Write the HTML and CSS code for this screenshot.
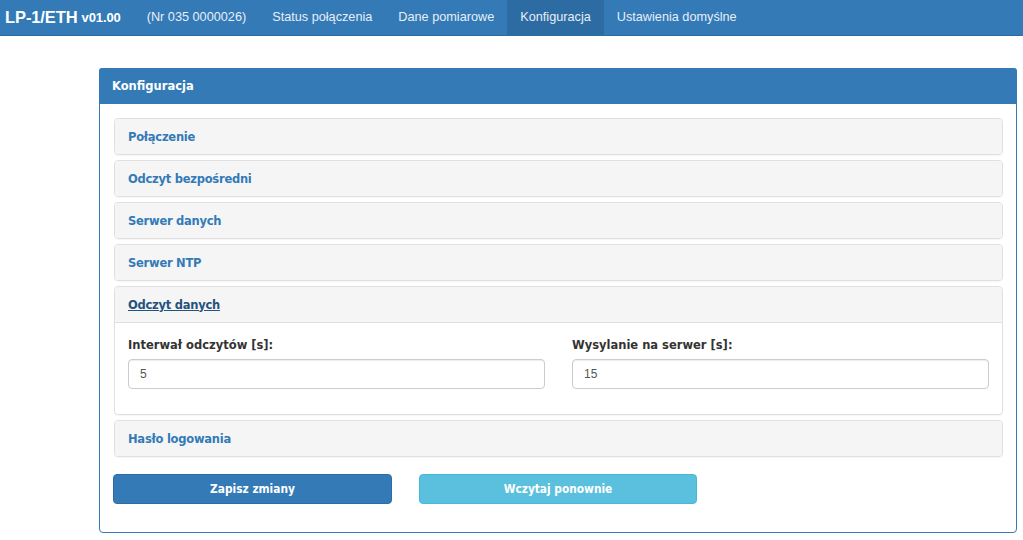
FILE: index.html
```html
<!DOCTYPE html>
<html lang="pl">
<head>
<meta charset="utf-8">
<title>LP-1/ETH</title>
<link rel="stylesheet" href="styles.css">
</head>
<body>
<nav class="navbar">
  <div class="brand">LP-1/ETH <small>v01.00</small></div>
  <ul class="nav">
    <li><a>(Nr 035 0000026)</a></li>
    <li><a>Status połączenia</a></li>
    <li><a>Dane pomiarowe</a></li>
    <li class="active"><a>Konfiguracja</a></li>
    <li><a>Ustawienia domyślne</a></li>
  </ul>
</nav>
<main class="wrap">
  <section class="panel">
    <div class="panel-title">Konfiguracja</div>
    <div class="panel-body">
      <div class="group">
        <div class="sub"><div class="sub-head"><a>Połączenie</a></div></div>
        <div class="sub"><div class="sub-head"><a>Odczyt bezpośredni</a></div></div>
        <div class="sub"><div class="sub-head"><a>Serwer danych</a></div></div>
        <div class="sub"><div class="sub-head"><a>Serwer NTP</a></div></div>
        <div class="sub">
          <div class="sub-head"><a class="open">Odczyt danych</a></div>
          <div class="sub-body">
            <div class="field">
              <label>Interwał odczytów [s]:</label>
              <div class="input">5</div>
            </div>
            <div class="field">
              <label>Wysylanie na serwer [s]:</label>
              <div class="input">15</div>
            </div>
          </div>
        </div>
        <div class="sub"><div class="sub-head"><a>Hasło logowania</a></div></div>
      </div>
      <div class="actions">
        <button class="btn btn-primary">Zapisz zmiany</button>
        <button class="btn btn-info">Wczytaj ponownie</button>
      </div>
    </div>
  </section>
</main>
</body>
</html>
```
FILE: styles.css
```css
* { box-sizing: border-box; }
html, body { margin: 0; padding: 0; background: #fff; }
body { font-family: "Liberation Sans", Arial, sans-serif; font-size: 13px; color: #333; }

.navbar {
  display: flex;
  align-items: stretch;
  height: 36px;
  background: #337ab7;
  border-bottom: 1px solid #2e6da4;
}
.brand {
  color: #fff;
  font-weight: bold;
  font-size: 16.5px;
  padding: 0 26px 0 5px;
  display: flex;
  align-items: center;
  letter-spacing: -0.1px;
}
.brand small { font-size: 13px; margin-left: 4px; }
.nav { display: flex; list-style: none; margin: 0; padding: 0; }
.nav li { display: flex; }
.nav a {
  display: flex;
  align-items: center;
  padding: 0 13px 1px 13px;
  color: #e8eef6;
  font-size: 12.7px;
}
.nav li:first-child a { padding-left: 0; }
.nav .active a { background: #2d6ca3; }

.wrap { padding: 32px 6px 0 99px; }

.panel {
  border: 1px solid #337ab7;
  border-radius: 4px;
  background: #fff;
  height: 465px;
}
.panel-title {
  background: #337ab7;
  color: #fff;
  font-family: "DejaVu Sans", Verdana, sans-serif;
  font-weight: bold;
  font-size: 11.5px;
  height: 36px;
  display: flex;
  align-items: center;
  padding: 0 13px;
  margin: -1px -1px 0;
  border-radius: 3px 3px 0 0;
}
.panel-body { padding: 14px 13px 0 14px; }

.group { display: flex; flex-direction: column; gap: 5px; }
.sub {
  border: 1px solid #e0e0e0;
  border-radius: 4px;
  box-shadow: 0 1px 1px rgba(0,0,0,0.04);
}
.sub-head {
  background: #f5f5f5;
  height: 35px;
  display: flex;
  align-items: center;
  padding: 0 13px;
  border-radius: 3px;
}
.sub-head a {
  color: #337ab7;
  font-family: "DejaVu Sans", Verdana, sans-serif;
  font-weight: bold;
  font-size: 11.5px;
  letter-spacing: -0.25px;
}
.sub-head a.open { color: #23527c; text-decoration: underline; }
.sub-body {
  border-top: 1px solid #e0e0e0;
  padding: 14px 13px 25px;
  display: grid;
  grid-template-columns: 1fr 1fr;
  column-gap: 27px;
}
.field label {
  display: block;
  font-family: "DejaVu Sans", Verdana, sans-serif;
  font-weight: bold;
  font-size: 11.5px;
  color: #333;
  line-height: 16px;
  margin-bottom: 6px;
}
.input {
  height: 30px;
  border: 1px solid #ccc;
  border-radius: 4px;
  box-shadow: inset 0 1px 1px rgba(0,0,0,0.075);
  padding: 0 11px;
  display: flex;
  align-items: center;
  font-size: 12px;
  color: #555;
}

.actions { display: flex; gap: 27px; margin-top: 17px; margin-left: -1px; }
.btn {
  width: 279px;
  height: 30px;
  border-radius: 4px;
  color: #fff;
  font-family: "DejaVu Sans Condensed", "DejaVu Sans", sans-serif;
  font-weight: bold;
  font-size: 11.8px;
  border: 1px solid;
  cursor: pointer;
}
.btn-primary { background: #337ab7; border-color: #2e6da4; }
.btn-info { background: #5bc0de; border-color: #46b8da; width: 278px; }
```
